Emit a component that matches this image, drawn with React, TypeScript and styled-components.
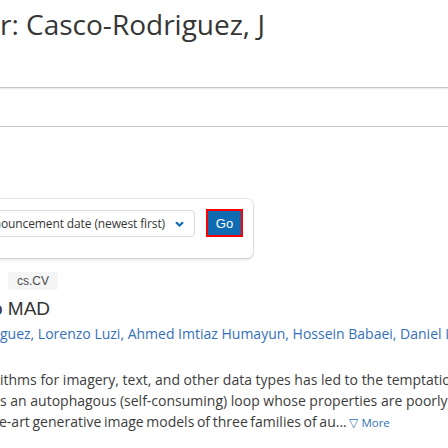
import React from 'react';
import styled, {createGlobalStyle} from "styled-components";

const GlobalStyle = createGlobalStyle`
  html, body {
    margin: 0;
    padding: 0;
    background: #fff;
  }
  body {
    font-family: "Open Sans", "Noto Sans", sans-serif;
    color: #363636;
  }
`

const StyledPage = styled.div`
  width: 448px;
  height: 448px;
  overflow: hidden;
  display: flex;
  flex-direction: column;
`

// a line of text whose start (and often end) lies beyond the window edges
const ClipLine = styled.div<{ $shift?: number, $tight?: boolean }>`
  white-space: nowrap;
  margin-left: ${p => p.$shift ?? 0}px;
  word-spacing: ${p => p.$tight ? "-1px" : "normal"};
`

const StyledTitle = styled(ClipLine)`
  margin-top: 4px;
  font-size: 28px;
  line-height: 40px;
  color: #363636;
`

const SearchInput = styled.div`
  margin: 43px -20px 0;
  height: 38px;
  border-top: 1px solid #c4c4c4;
  border-bottom: 1px solid #c9c9c9;
  box-shadow: inset 0 1px 2px rgba(10, 10, 10, 0.1);
`

const SortBox = styled.div`
  margin-top: 72px;
  margin-left: -40px;
  width: 293px;
  box-sizing: border-box;
  padding: 11px 10px 21px;
  border-radius: 6px;
  box-shadow: 0 2px 3px rgba(10, 10, 10, 0.1), 0 0 0 1px rgba(10, 10, 10, 0.1);
  display: flex;
  align-items: center;
  gap: 11px;
`

const SortSelect = styled.div`
  flex: 1;
  height: 27px;
  box-sizing: border-box;
  border: 1px solid #dbdbdb;
  border-radius: 4px;
  display: flex;
  align-items: center;
  justify-content: flex-end;
  overflow: hidden;
  padding-right: 10px;
  gap: 10px;
  font-size: 12px;
  letter-spacing: -0.12px;
  color: #363636;
  white-space: nowrap;
`

const Chevron = styled.svg`
  flex: none;
  width: 9px;
  height: 6px;
`

const GoButton = styled.button`
  flex: none;
  width: 37px;
  height: 28px;
  padding: 0;
  background: #0f6cb2;
  color: #fff;
  border: 2px solid #f00;
  border-radius: 0;
  font-family: "Liberation Sans", Arial, sans-serif;
  font-size: 13px;
  margin-top: -1px;
`

const TagRow = styled.div`
  margin-top: 14px;
  padding-left: 8px;
  display: flex;
  gap: 6px;
`

const Tag = styled.span`
  height: 18px;
  padding: 0 9px;
  background: #f5f5f5;
  border-radius: 3px;
  font-family: "Liberation Sans", Arial, sans-serif;
  font-size: 12px;
  line-height: 18px;
  color: #4a4a4a;
`

const PaperTitle = styled(ClipLine)`
  margin-top: 7px;
  font-family: "Liberation Sans", Arial, sans-serif;
  font-size: 19px;
  line-height: 24px;
  color: #363636;
`

const Authors = styled(ClipLine)`
  margin-top: 2px;
  font-size: 14px;
  line-height: 21px;
  color: #3470b8;
`

const Abstract = styled.div`
  margin-top: 25px;
  font-size: 14px;
  line-height: 21px;
  color: #3c3c3c;
`

const MoreLink = styled.span`
  font-size: 11.5px;
  word-spacing: normal;
  color: #3470b8;
`

const App = () => {
    return (
        <>
            <GlobalStyle/>
            <StyledPage>
                <StyledTitle>r: Casco-Rodriguez, J</StyledTitle>
                <SearchInput/>
                <SortBox>
                    <SortSelect>
                        <span>announcement date (newest first)</span>
                        <Chevron viewBox="0 0 9 6">
                            <path d="M1 1.2 L4.5 4.5 L8 1.2" fill="none" stroke="#0f6cb2" strokeWidth="2.2"/>
                        </Chevron>
                    </SortSelect>
                    <GoButton>Go</GoButton>
                </SortBox>
                <TagRow>
                    <Tag>cs.CV</Tag>
                </TagRow>
                <PaperTitle $shift={-8}>o MAD</PaperTitle>
                <Authors>guez, Lorenzo Luzi, Ahmed Imtiaz Humayun, Hossein Babaei, Daniel LeJeune, Ali Siahkoohi, Richard G. Baraniuk</Authors>
                <Abstract>
                    <ClipLine>ithms for imagery, text, and other data types has led to the temptation to use synthetic data</ClipLine>
                    <ClipLine>s an autophagous (self-consuming) loop whose properties are poorly understood. We conduct</ClipLine>
                    <ClipLine $shift={-1} $tight>e-art generative image models of three families of au... <MoreLink>▽ More</MoreLink></ClipLine>
                </Abstract>
            </StyledPage>
        </>
    )
}

export default App;
